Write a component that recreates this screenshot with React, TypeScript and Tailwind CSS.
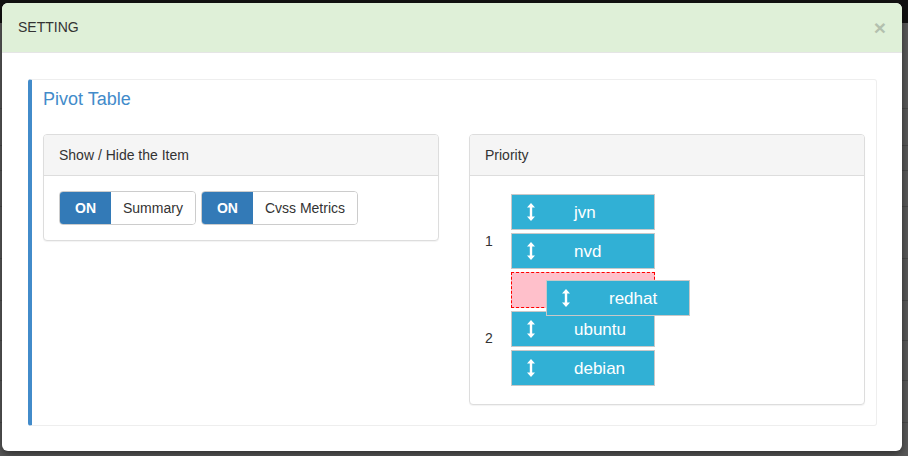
import React from "react";

const font = { fontFamily: '"Liberation Sans", Arial, sans-serif' };

function ResizeIcon() {
  return (
    <svg width="8" height="18" viewBox="0 0 8 18" className="shrink-0">
      <path d="M4 0 L8 4.5 L5.2 4.5 L5.2 13.5 L8 13.5 L4 18 L0 13.5 L2.8 13.5 L2.8 4.5 L0 4.5 Z" fill="#fff" />
    </svg>
  );
}

function Item({ label }: { label: string }) {
  return (
    <div className="flex h-[36px] w-[144px] items-center border border-[#c8c8c8] bg-[#31b0d5] pl-[15px] text-[17px] text-white">
      <ResizeIcon />
      <span className="ml-[39px] leading-none">{label}</span>
    </div>
  );
}

function Toggle({ label }: { label: string }) {
  return (
    <div className="flex h-[34px] overflow-hidden rounded-[4px] border border-[#ccc] text-[14px]">
      <div className="flex w-[51px] items-center justify-center bg-[#337ab7] font-bold text-white">ON</div>
      <div className="flex items-center bg-white px-[12px] text-[#333]">{label}</div>
    </div>
  );
}

export default function App() {
  const bgLines = [108, 145, 170, 206, 258, 300, 340, 380, 422];
  return (
    <div className="relative h-[456px] w-[908px] overflow-hidden bg-[#5a5a5a]" style={font}>
      <div className="h-[23px] w-full bg-[#121212]" />
      {bgLines.map((y) => (
        <div key={y} className="absolute left-0 right-0 h-px bg-[#4a4a4a]" style={{ top: y }} />
      ))}

      <div className="absolute left-[2px] top-[3px] flex h-[448px] w-[900px] flex-col overflow-hidden rounded-[6px] bg-white shadow-[0_3px_9px_rgba(0,0,0,0.5)]">
        <div className="flex h-[50px] shrink-0 items-center justify-between border-b border-[#e5e5e5] bg-[#dff0d8] pl-[16px] pr-[16px]">
          <span className="text-[14px] text-[#333]">SETTING</span>
          <span className="text-[21px] font-bold leading-none text-[#333] opacity-25">×</span>
        </div>

        <div className="flex-1 p-[25px] pl-[26px] pt-[26px]">
          <div className="h-[347px] rounded-[3px] border border-l-4 border-[#eee] border-l-[#428bca] pl-[11px] pr-[11px] pt-[8px]">
            <h4 className="text-[18px] leading-[22px] text-[#428bca]">Pivot Table</h4>
            <div className="mt-[24px] grid grid-cols-2 gap-[30px]">
              <div className="self-start rounded-[4px] border border-[#ddd] bg-white shadow-[0_1px_1px_rgba(0,0,0,0.05)]">
                <div className="flex h-[41px] items-center rounded-t-[3px] border-b border-[#ddd] bg-[#f5f5f5] px-[15px] text-[14px] text-[#333]">
                  Show / Hide the Item
                </div>
                <div className="flex gap-[5px] p-[15px]">
                  <Toggle label="Summary" />
                  <Toggle label="Cvss Metrics" />
                </div>
              </div>

              <div className="relative h-[271px] rounded-[4px] border border-[#ddd] bg-white shadow-[0_1px_1px_rgba(0,0,0,0.05)]">
                <div className="flex h-[41px] items-center rounded-t-[3px] border-b border-[#ddd] bg-[#f5f5f5] px-[15px] text-[14px] text-[#333]">
                  Priority
                </div>
                <div className="flex flex-col gap-[3px] pl-[15px] pt-[18px]">
                  <div className="flex items-center">
                    <span className="mt-[19px] w-[26px] text-[14px] text-[#333]">1</span>
                    <div className="flex flex-col gap-[3px]">
                      <Item label="jvn" />
                      <Item label="nvd" />
                    </div>
                  </div>
                  <div className="flex items-center">
                    <span className="mt-[19px] w-[26px] text-[14px] text-[#333]">2</span>
                    <div className="flex flex-col gap-[3px]">
                      <div className="h-[36px] w-[144px] border border-dashed border-[#f00] bg-[#ffc0cb]" />
                      <Item label="ubuntu" />
                      <Item label="debian" />
                    </div>
                  </div>
                </div>
                <div className="absolute left-[76px] top-[145px]">
                  <Item label="redhat" />
                </div>
              </div>
            </div>
          </div>
        </div>
      </div>
    </div>
  );
}
